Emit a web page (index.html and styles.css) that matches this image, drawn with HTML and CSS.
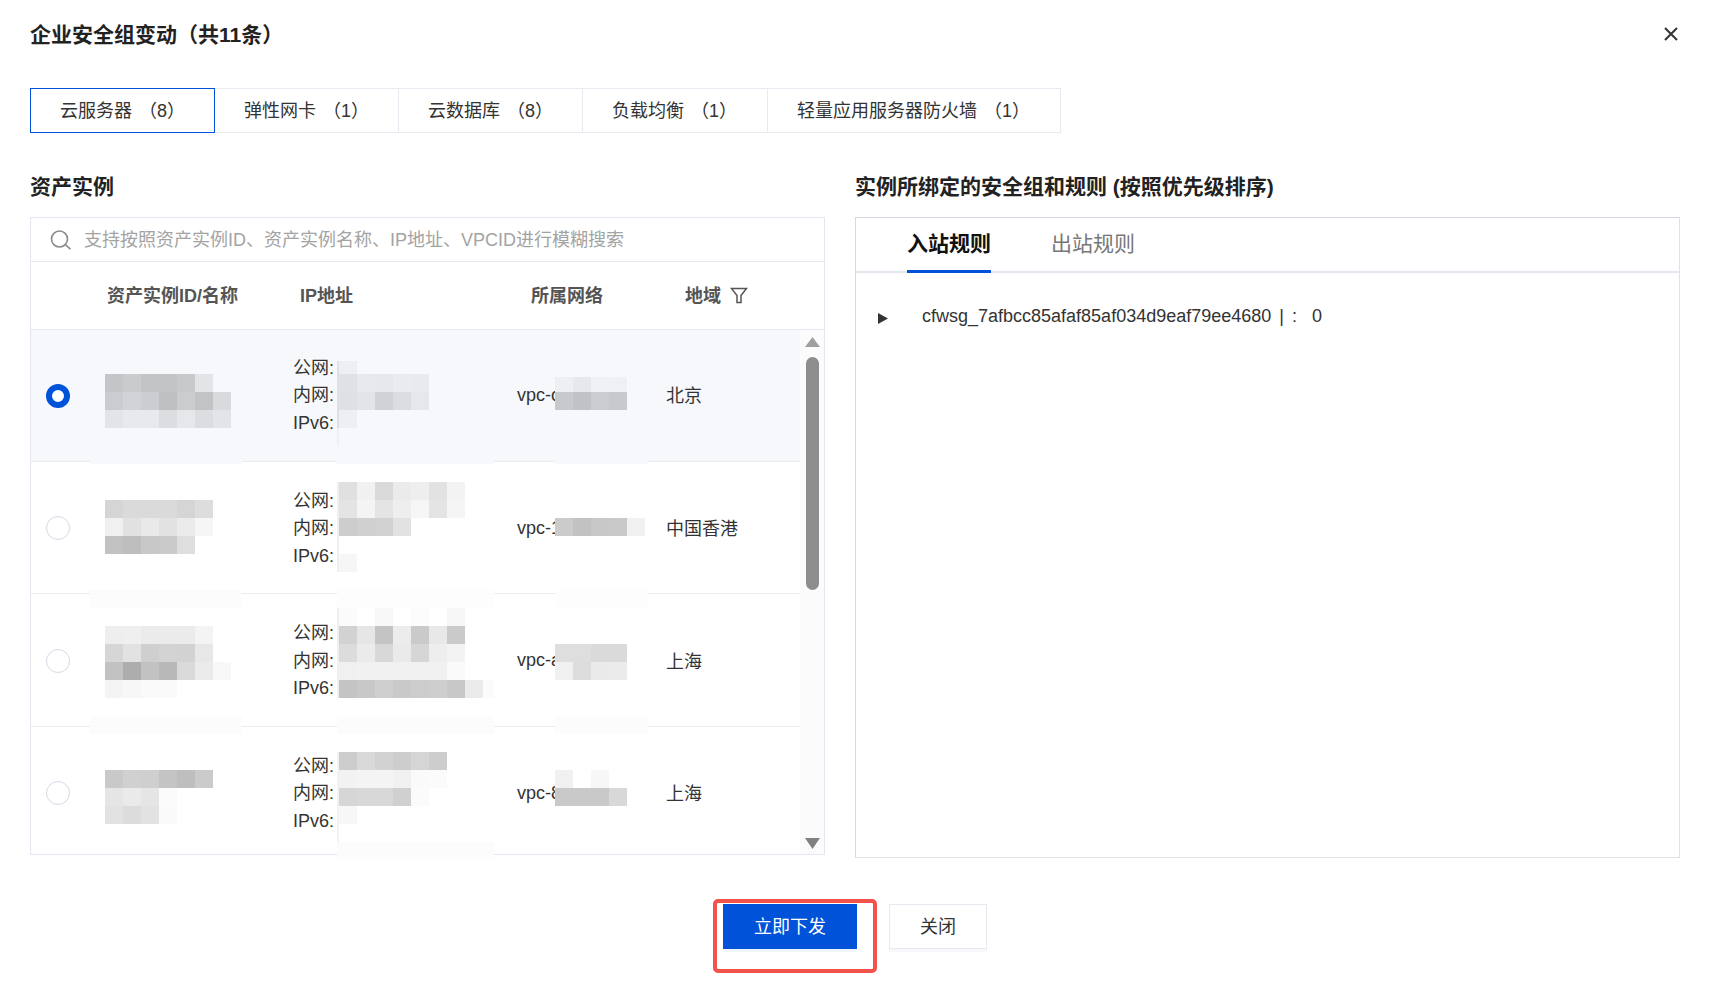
FILE: index.html
```html
<!DOCTYPE html>
<html lang="zh-CN">
<head>
<meta charset="utf-8">
<title>企业安全组变动</title>
<link rel="stylesheet" href="styles.css">
</head>
<body>
<div class="dialog">
  <header class="head">
    <h1 class="title">企业安全组变动（共11条）</h1>
    <svg class="close-x" viewBox="0 0 14 14" width="14" height="14"><path d="M1 1 L13 13 M13 1 L1 13" fill="none" stroke="#333" stroke-width="2"/></svg>
  </header>

  <nav class="tabs">
    <div class="tab active">云服务器 （8）</div>
    <div class="tab">弹性网卡 （1）</div>
    <div class="tab">云数据库 （8）</div>
    <div class="tab">负载均衡 （1）</div>
    <div class="tab">轻量应用服务器防火墙 （1）</div>
  </nav>

  <main class="columns">
    <section class="col-left">
      <h2 class="section-title">资产实例</h2>
      <div class="panel-left">
        <div class="search">
          <svg class="search-icon" viewBox="0 0 22 20" width="22" height="20"><circle cx="9.5" cy="9" r="8" fill="none" stroke="#8a8a8a" stroke-width="1.6"/><path d="M15.5 14.8 L20.5 19.2" fill="none" stroke="#8a8a8a" stroke-width="1.6"/></svg>
          <span class="placeholder">支持按照资产实例ID、资产实例名称、IP地址、VPCID进行模糊搜索</span>
        </div>
        <div class="thead">
          <span></span>
          <span>资产实例ID/名称</span>
          <span>IP地址</span>
          <span>所属网络</span>
          <span class="th-filter">地域
            <svg viewBox="0 0 18 17" width="18" height="17"><path d="M1.5 1.5 H16.5 L11 8.5 V15.5 H7 V8.5 Z M1.5 1.5" fill="none" stroke="#555" stroke-width="1.5"/></svg>
          </span>
        </div>
        <div class="tbody">
          <div class="rows">
            <div class="row selected">
              <span class="radio on"></span>
              <span></span>
              <div class="ips"><div>公网:</div><div>内网:</div><div>IPv6:</div></div>
              <div>vpc-c</div>
              <div class="region">北京</div>
            </div>
            <div class="row">
              <span class="radio"></span>
              <span></span>
              <div class="ips"><div>公网:</div><div>内网:</div><div>IPv6:</div></div>
              <div>vpc-1</div>
              <div class="region">中国香港</div>
            </div>
            <div class="row">
              <span class="radio"></span>
              <span></span>
              <div class="ips"><div>公网:</div><div>内网:</div><div>IPv6:</div></div>
              <div>vpc-a</div>
              <div class="region">上海</div>
            </div>
            <div class="row">
              <span class="radio"></span>
              <span></span>
              <div class="ips"><div>公网:</div><div>内网:</div><div>IPv6:</div></div>
              <div>vpc-8</div>
              <div class="region">上海</div>
            </div>
          </div>
          <div class="scrollbar">
            <svg class="arrow-up" viewBox="0 0 15 10" width="15" height="10"><path d="M7.5 0 L15 10 H0 Z" fill="#a0a0a0"/></svg>
            <div class="thumb"></div>
            <svg class="arrow-down" viewBox="0 0 15 11" width="15" height="11"><path d="M0 0 H15 L7.5 11 Z" fill="#808080"/></svg>
          </div>
          <svg class="mosaic" viewBox="31 330 770 530" width="770" height="530">
            <g class="band">
              <rect x="90" y="459" width="152" height="5" fill="#f6f8fc"/>
              <rect x="337" y="459" width="157" height="5" fill="#f6f8fc"/>
              <rect x="555" y="459" width="93" height="5" fill="#f6f8fc"/>
              <rect x="90" y="590" width="152" height="18" fill="#fcfcfd"/>
              <rect x="337" y="590" width="157" height="18" fill="#fdfdfd"/>
              <rect x="555" y="590" width="93" height="18" fill="#fdfdfd"/>
              <rect x="90" y="716" width="152" height="18" fill="#fcfcfc"/>
              <rect x="337" y="716" width="157" height="18" fill="#fcfcfc"/>
              <rect x="555" y="716" width="93" height="18" fill="#fcfcfc"/>
              <rect x="337" y="842" width="157" height="17" fill="#fcfcfc"/>
              <rect x="337" y="361" width="2" height="67" fill="#dfe0e4"/>
              <rect x="337" y="428" width="2" height="18" fill="#eff0f4"/>
              <rect x="337" y="482" width="2" height="90" fill="#efefef"/>
              <rect x="337" y="608" width="2" height="90" fill="#efefef"/>
              <rect x="337" y="752" width="2" height="90" fill="#f2f2f2"/>
              <rect x="339" y="361" width="18" height="13" fill="#eeeff2"/>
              <rect x="555" y="377" width="18" height="15" fill="#eeeff2"/>
              <rect x="573" y="377" width="18" height="15" fill="#e7e8eb"/>
              <rect x="591" y="377" width="18" height="15" fill="#f0f1f4"/>
              <rect x="609" y="377" width="18" height="15" fill="#eff0f3"/>
              <rect x="483" y="680" width="11" height="18" fill="#fbfbfb"/>
            </g>
            <g class="cells">
              <!-- row 1 name -->
              <rect x="105" y="374" fill="#c4c5c8"/><rect x="123" y="374" fill="#cacbcd"/><rect x="141" y="374" fill="#c3c4c6"/><rect x="159" y="374" fill="#c3c4c6"/><rect x="177" y="374" fill="#c8c9cb"/><rect x="195" y="374" fill="#e3e4e7"/>
              <rect x="105" y="392" fill="#cbcccf"/><rect x="123" y="392" fill="#d2d3d6"/><rect x="141" y="392" fill="#cccdd0"/><rect x="159" y="392" fill="#bfc0c2"/><rect x="177" y="392" fill="#cbccce"/><rect x="195" y="392" fill="#c2c3c5"/><rect x="213" y="392" fill="#d9dade"/>
              <rect x="105" y="410" fill="#e3e4e7"/><rect x="123" y="410" fill="#e8e9ec"/><rect x="141" y="410" fill="#e8e9ed"/><rect x="159" y="410" fill="#dcdde0"/><rect x="177" y="410" fill="#e6e7ea"/><rect x="195" y="410" fill="#dcdde0"/><rect x="213" y="410" fill="#e3e4e8"/>
              <!-- row 1 ip -->
              <rect x="339" y="374" fill="#e0e1e5"/><rect x="357" y="374" fill="#e8e9ec"/><rect x="375" y="374" fill="#e6e7ea"/><rect x="393" y="374" fill="#eaebee"/><rect x="411" y="374" fill="#e9eaed"/>
              <rect x="339" y="392" fill="#dfe0e4"/><rect x="357" y="392" fill="#e3e4e7"/><rect x="375" y="392" fill="#d1d2d6"/><rect x="393" y="392" fill="#dcdde1"/><rect x="411" y="392" fill="#e6e7ea"/>
              <rect x="339" y="410" fill="#eeeff3"/>
              <!-- row 1 vpc -->
              <rect x="555" y="392" fill="#c8c9cc"/><rect x="573" y="392" fill="#c1c2c5"/><rect x="591" y="392" fill="#cbccd0"/><rect x="609" y="392" fill="#c8c9cd"/>
              <!-- row 2 name -->
              <rect x="105" y="500" fill="#d5d5d5"/><rect x="123" y="500" fill="#dadada"/><rect x="141" y="500" fill="#dadada"/><rect x="159" y="500" fill="#dadada"/><rect x="177" y="500" fill="#d5d5d5"/><rect x="195" y="500" fill="#dddddd"/>
              <rect x="105" y="518" fill="#f0f0f0"/><rect x="123" y="518" fill="#e1e1e1"/><rect x="141" y="518" fill="#e9e9e9"/><rect x="159" y="518" fill="#e2e2e2"/><rect x="177" y="518" fill="#ebebeb"/><rect x="195" y="518" fill="#f6f6f6"/>
              <rect x="105" y="536" fill="#c2c2c2"/><rect x="123" y="536" fill="#bebebe"/><rect x="141" y="536" fill="#c8c8c8"/><rect x="159" y="536" fill="#cacaca"/><rect x="177" y="536" fill="#dedede"/>
              <!-- row 2 ip -->
              <rect x="339" y="482" fill="#e0e0e0"/><rect x="357" y="482" fill="#f1f1f1"/><rect x="375" y="482" fill="#dadada"/><rect x="393" y="482" fill="#ebebeb"/><rect x="411" y="482" fill="#eeeeee"/><rect x="429" y="482" fill="#e2e2e2"/><rect x="447" y="482" fill="#f3f3f3"/>
              <rect x="339" y="500" fill="#e4e4e4"/><rect x="357" y="500" fill="#f4f4f4"/><rect x="375" y="500" fill="#e4e4e4"/><rect x="393" y="500" fill="#eeeeee"/><rect x="411" y="500" fill="#f6f6f6"/><rect x="429" y="500" fill="#e4e4e4"/><rect x="447" y="500" fill="#f5f5f5"/>
              <rect x="339" y="518" fill="#cdcdcd"/><rect x="357" y="518" fill="#d0d0d0"/><rect x="375" y="518" fill="#d2d2d2"/><rect x="393" y="518" fill="#e2e2e2"/>
              <rect x="339" y="554" fill="#f6f6f6"/>
              <!-- row 2 vpc -->
              <rect x="555" y="518" fill="#cbcbcb"/><rect x="573" y="518" fill="#c2c2c2"/><rect x="591" y="518" fill="#c8c8c8"/><rect x="609" y="518" fill="#c9c9c9"/><rect x="627" y="518" fill="#f1f1f1"/>
              <!-- row 3 name -->
              <rect x="105" y="626" fill="#eeeeee"/><rect x="123" y="626" fill="#efefef"/><rect x="141" y="626" fill="#ebebeb"/><rect x="159" y="626" fill="#ebebeb"/><rect x="177" y="626" fill="#ebebeb"/><rect x="195" y="626" fill="#f4f4f4"/>
              <rect x="105" y="644" fill="#d6d6d6"/><rect x="123" y="644" fill="#e2e2e2"/><rect x="141" y="644" fill="#cfcfcf"/><rect x="159" y="644" fill="#d3d3d3"/><rect x="177" y="644" fill="#d2d2d2"/><rect x="195" y="644" fill="#e7e7e7"/>
              <rect x="105" y="662" fill="#c2c2c2"/><rect x="123" y="662" fill="#adadad"/><rect x="141" y="662" fill="#c2c2c2"/><rect x="159" y="662" fill="#b8b8b8"/><rect x="177" y="662" fill="#dadada"/><rect x="195" y="662" fill="#ebebeb"/><rect x="213" y="662" fill="#f8f8f8"/>
              <rect x="105" y="680" fill="#f4f4f4"/><rect x="123" y="680" fill="#f7f7f7"/><rect x="141" y="680" fill="#fafafa"/><rect x="159" y="680" fill="#fafafa"/>
              <!-- row 3 ip -->
              <rect x="339" y="608" fill="#fbfbfb"/><rect x="375" y="608" fill="#f8f8f8"/><rect x="411" y="608" fill="#fcfcfc"/><rect x="447" y="608" fill="#f7f7f7"/>
              <rect x="339" y="626" fill="#d2d2d2"/><rect x="357" y="626" fill="#e6e6e6"/><rect x="375" y="626" fill="#c4c4c4"/><rect x="393" y="626" fill="#ececec"/><rect x="411" y="626" fill="#cacaca"/><rect x="429" y="626" fill="#e8e8e8"/><rect x="447" y="626" fill="#cacaca"/>
              <rect x="339" y="644" fill="#dcdcdc"/><rect x="357" y="644" fill="#ebebeb"/><rect x="375" y="644" fill="#d8d8d8"/><rect x="393" y="644" fill="#eaeaea"/><rect x="411" y="644" fill="#d6d6d6"/><rect x="429" y="644" fill="#eeeeee"/><rect x="447" y="644" fill="#f3f3f3"/>
              <rect x="339" y="662" fill="#f0f0f0"/><rect x="357" y="662" fill="#f1f1f1"/><rect x="375" y="662" fill="#f1f1f1"/><rect x="393" y="662" fill="#f1f1f1"/><rect x="411" y="662" fill="#f1f1f1"/><rect x="429" y="662" fill="#f1f1f1"/><rect x="447" y="662" fill="#fafafa"/>
              <rect x="339" y="680" fill="#c4c4c4"/><rect x="357" y="680" fill="#c8c8c8"/><rect x="375" y="680" fill="#cfcfcf"/><rect x="393" y="680" fill="#c9c9c9"/><rect x="411" y="680" fill="#cccccc"/><rect x="429" y="680" fill="#cecece"/><rect x="447" y="680" fill="#c8c8c8"/><rect x="465" y="680" fill="#ebebeb"/>
              <!-- row 3 vpc -->
              <rect x="555" y="644" fill="#dedede"/><rect x="573" y="644" fill="#dedede"/><rect x="591" y="644" fill="#dadada"/><rect x="609" y="644" fill="#dadada"/>
              <rect x="555" y="662" fill="#f0f0f0"/><rect x="573" y="662" fill="#dddddd"/><rect x="591" y="662" fill="#eaeaea"/><rect x="609" y="662" fill="#ebebeb"/>
              <!-- row 4 name -->
              <rect x="105" y="770" fill="#c9c9c9"/><rect x="123" y="770" fill="#d0d0d0"/><rect x="141" y="770" fill="#cfcfcf"/><rect x="159" y="770" fill="#c4c4c4"/><rect x="177" y="770" fill="#bebebe"/><rect x="195" y="770" fill="#cbcbcb"/>
              <rect x="105" y="788" fill="#e5e5e5"/><rect x="123" y="788" fill="#eaeaea"/><rect x="141" y="788" fill="#e5e5e5"/><rect x="159" y="788" fill="#fbfbfb"/>
              <rect x="105" y="806" fill="#e2e2e2"/><rect x="123" y="806" fill="#dcdcdc"/><rect x="141" y="806" fill="#e2e2e2"/><rect x="159" y="806" fill="#fafafa"/>
              <!-- row 4 ip -->
              <rect x="339" y="752" fill="#cdcdcd"/><rect x="357" y="752" fill="#d9d9d9"/><rect x="375" y="752" fill="#d2d2d2"/><rect x="393" y="752" fill="#cdcdcd"/><rect x="411" y="752" fill="#d5d5d5"/><rect x="429" y="752" fill="#cdcdcd"/>
              <rect x="339" y="770" fill="#f2f2f2"/><rect x="357" y="770" fill="#f4f4f4"/><rect x="375" y="770" fill="#f4f4f4"/><rect x="393" y="770" fill="#f1f1f1"/><rect x="411" y="770" fill="#fafafa"/><rect x="429" y="770" fill="#fbfbfb"/>
              <rect x="339" y="788" fill="#d6d6d6"/><rect x="357" y="788" fill="#d8d8d8"/><rect x="375" y="788" fill="#d8d8d8"/><rect x="393" y="788" fill="#d0d0d0"/><rect x="411" y="788" fill="#fbfbfb"/>
              <rect x="339" y="806" fill="#f7f7f7"/>
              <!-- row 4 vpc -->
              <rect x="555" y="770" fill="#f0f0f0"/><rect x="573" y="770" fill="#ffffff"/><rect x="591" y="770" fill="#f7f7f7"/><rect x="609" y="770" fill="#ffffff"/>
              <rect x="555" y="788" fill="#c9c9c9"/><rect x="573" y="788" fill="#c9c9c9"/><rect x="591" y="788" fill="#c9c9c9"/><rect x="609" y="788" fill="#d8d8d8"/>
            </g>
          </svg>
        </div>
      </div>
    </section>

    <section class="col-right">
      <h2 class="section-title">实例所绑定的安全组和规则 (按照优先级排序)</h2>
      <div class="panel-right">
        <div class="rule-tabs">
          <div class="rule-tab active">入站规则</div>
          <div class="rule-tab">出站规则</div>
        </div>
        <div class="rule-row">
          <svg class="caret" viewBox="0 0 10 11" width="10" height="11"><path d="M0 0 L10 5.5 L0 11 Z" fill="#333"/></svg>
          <span class="rule-name">cfwsg_7afbcc85afaf85af034d9eaf79ee4680</span>
          <span class="rule-sep">|</span>
          <span class="rule-sep">:</span>
          <span class="rule-count">0</span>
        </div>
      </div>
    </section>
  </main>

  <footer class="foot">
    <button class="btn primary"><span class="btn-text">立即下发</span><span class="mark"></span></button>
    <button class="btn"><span class="btn-text">关闭</span></button>
  </footer>
</div>
</body>
</html>
```

FILE: styles.css
```css
* { box-sizing: border-box; }
html, body { margin: 0; padding: 0; background: #fff; }
body {
  font-family: "Liberation Sans", "Noto Sans CJK SC", sans-serif;
  font-size: 18px;
  color: #333;
}
.dialog { width: 1713px; height: 982px; padding: 0 33px 0 30px; overflow: hidden; }

.head { display: flex; justify-content: space-between; align-items: center; height: 70px; padding-right: 2px; }
.title { margin: -4px 0 0; font-size: 21px; font-weight: 700; color: #222; }
.close-x { display: block; margin-top: -3px; }

.tabs { display: grid; grid-template-columns: 185px 184px 184px 185px 293px; width: 1031px; height: 45px; margin-top: 18px; }
.tab {
  display: flex; align-items: center; padding: 0 0 3px 29px; white-space: pre; word-spacing: 2px;
  border: 1px solid #e8eaf2; border-left: 0; color: #333;
}
.tab.active { border: 1.5px solid #0052d9; }

.columns { display: flex; gap: 30px; margin-top: 40px; }
.col-left { width: 795px; }
.col-right { width: 825px; }
.section-title { margin: 0 0 16px; height: 28px; font-size: 21px; line-height: 28px; font-weight: 700; color: #222; }

.panel-left { height: 638px; border: 1px solid #e5e7f0; }
.search { display: flex; align-items: center; height: 44px; padding-left: 19px; gap: 12px; border-bottom: 1px solid #e5e7f0; }
.search-icon { display: block; }
.placeholder { color: #a3a3a3; margin-top: -4px; }

.thead {
  display: grid; grid-template-columns: 76px 193px 231px 154px 1fr; align-items: center;
  height: 68px; padding-bottom: 4px; font-weight: 700; color: #555; border-bottom: 1px solid #e5e7f0;
}
.th-filter { display: flex; align-items: center; gap: 9px; }
.th-filter svg { display: block; margin-top: 4px; }

.tbody { position: relative; display: flex; height: 524px; }
.rows { width: 770px; height: 524px; overflow: hidden; }
.row {
  display: grid; grid-template-columns: 74px 188px 224px 150px 1fr; align-items: center;
  height: 132.5px; padding-top: 2px; border-bottom: 1px solid #e9ebf3;
}
.row.selected { height: 131.5px; padding-top: 0; background: #f6f8fc; }
.radio { display: block; width: 24px; height: 24px; margin-left: 15px; border-radius: 50%; border: 1.5px solid #d5d9e5; background: #fff; }
.radio.on { margin-top: 2px; border: 6px solid #0052d9; }
.ips { line-height: 27.5px; padding-top: 1px; }
.region { margin: -2px 0 0 -1px; }

.scrollbar { display: flex; flex-direction: column; align-items: center; width: 24px; background: #fbfbfb; padding: 7px 0 5px; }
.arrow-up, .arrow-down { display: block; flex: none; }
.thumb { width: 13px; height: 233px; margin-top: 10px; border-radius: 7px; background: #8d8d8d; }
.arrow-down { margin-top: auto; }

.mosaic { position: absolute; left: 0; top: 0; overflow: visible; pointer-events: none; }
.cells rect { width: 18px; height: 18px; }

.panel-right { height: 641px; border: 1px solid #d6d9e3; border-right-color: #e0e2ea; border-bottom-color: #e0e2ea; }
.rule-tabs { display: flex; gap: 60px; height: 55px; padding-left: 51px; border-bottom: 2px solid #e5e7f0; }
.rule-tab { height: 55px; padding: 12px 0 0; font-size: 21px; line-height: 28px; color: #777; }
.rule-tab.active { font-weight: 700; color: #111; border-bottom: 3px solid #0052d9; }
.rule-row { display: flex; align-items: center; height: 26px; margin-top: 30px; padding-left: 22px; }
.caret { display: block; margin-top: 5px; flex: none; }
.rule-name { margin-left: 34px; }
.rule-sep { margin-left: 8px; }
.rule-count { margin-left: 15px; }

.foot { display: flex; justify-content: center; gap: 32px; margin-top: 46px; padding-left: 0; }
.btn {
  position: relative; width: 98px; height: 45px; padding: 0 0 3px; border: 1.5px solid #e7e8f0; background: #fff;
  font: inherit; color: #333; box-shadow: 0 3px 0 #f7f8fc;
}
.btn.primary { width: 134px; background: #0052d9; border: 0; color: #fff; box-shadow: 0 3px 0 #f1f5fc; }
.mark { position: absolute; left: -10px; top: -5px; width: 164px; height: 74px; border: 4px solid #f2524a; border-radius: 5px; }
```
